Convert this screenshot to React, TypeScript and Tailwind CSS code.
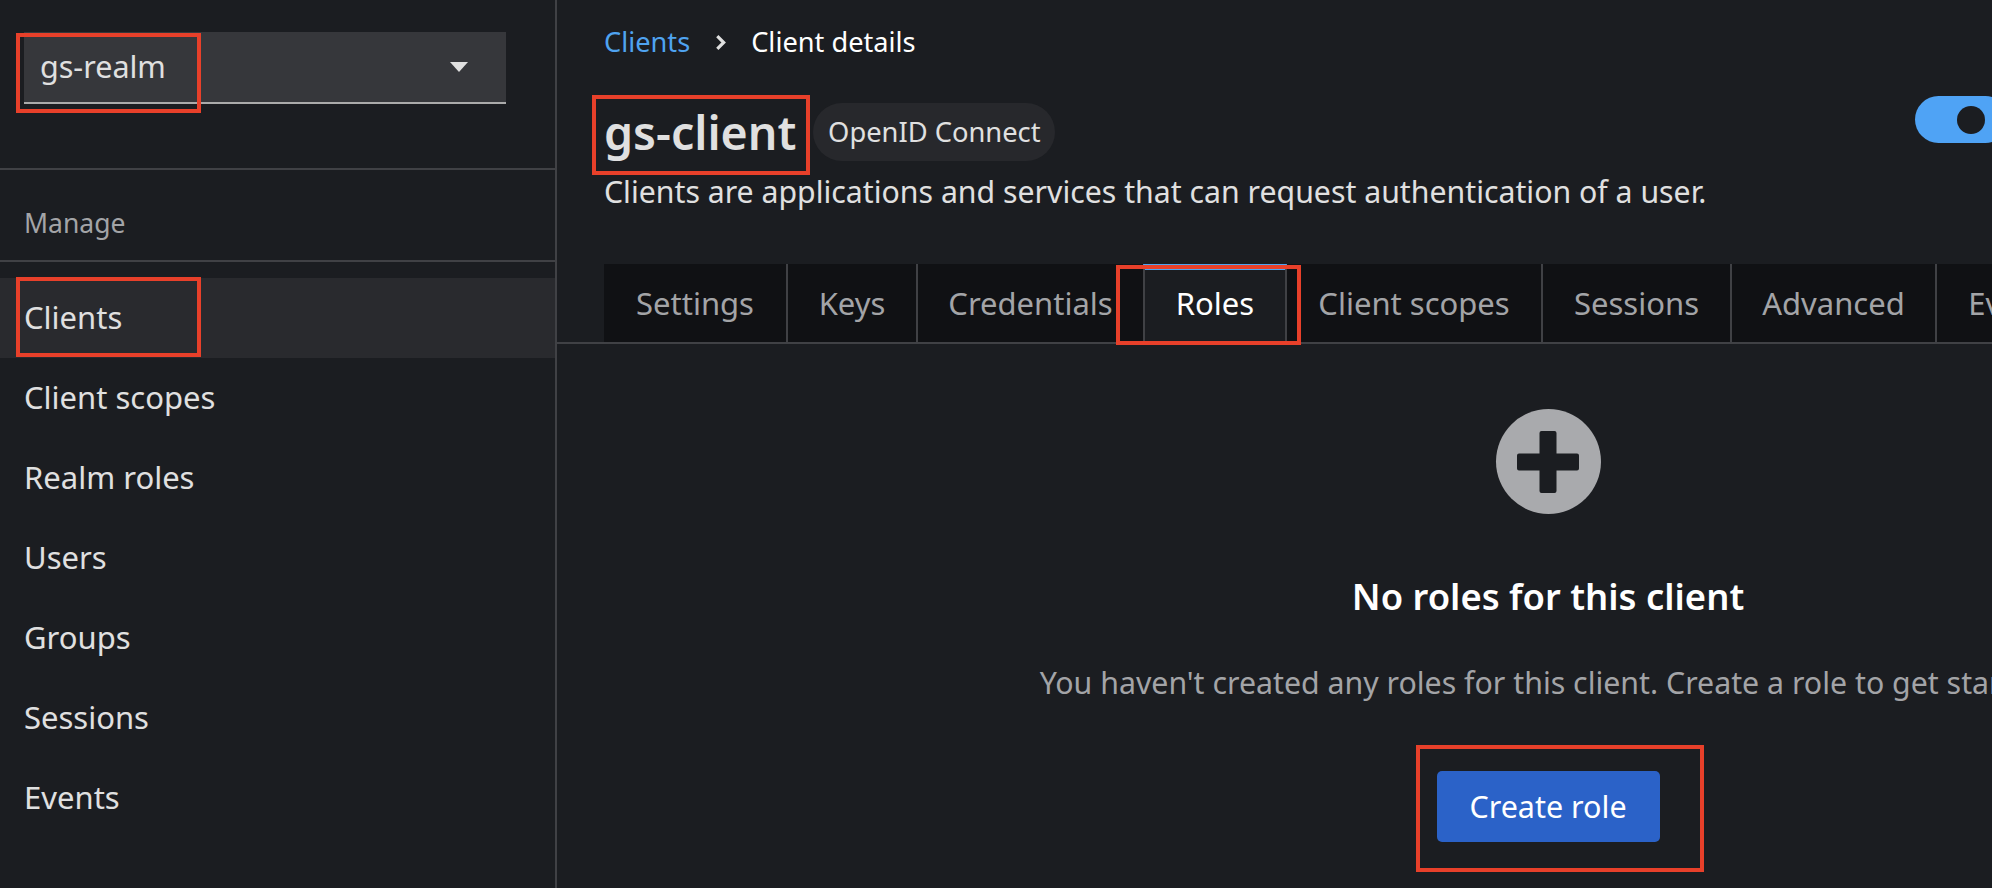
const nav = ["Clients", "Client scopes", "Realm roles", "Users", "Groups", "Sessions", "Events"];
const tabs: [string, string][] = [
  ["Settings", "w-[184px]"],
  ["Keys", "w-[130px]"],
  ["Credentials", "w-[225px]"],
  ["Roles", "w-[144px]"],
  ["Client scopes", "w-[256px]"],
  ["Sessions", "w-[189px]"],
  ["Advanced", "w-[205px]"],
  ["Events", "w-[160px]"],
];

function Box({ cls }: { cls: string }) {
  return <div className={`absolute border-[4px] border-[#e8402a] pointer-events-none ${cls}`} />;
}

export default function App() {
  return (
    <div className="relative flex w-[1992px] h-[888px] overflow-hidden bg-[#1b1d21] font-['Noto_Sans',sans-serif] text-[#e0e0e0]">
      <aside className="w-[557px] shrink-0 h-full border-r-2 border-[#404145] flex flex-col">
        <div className="h-[170px] border-b-2 border-[#404145] pt-[32px] pl-[24px]">
          <div className="w-[482px] h-[72px] bg-[#36373b] border-b-2 border-[#ababab] flex items-center justify-between pl-[16px] pr-[37px] text-[30.5px]">
            <span>gs-realm</span>
            <svg viewBox="0 0 20 12" className="w-[20px] h-[12px] fill-[#e0e0e0]"><path d="M1 1h18l-9 10z" /></svg>
          </div>
        </div>
        <div className="h-[92px] border-b-2 border-[#404145] flex items-center pl-[24px] pt-[18px] text-[26.5px] text-[#a3a4a7]">Manage</div>
        <nav className="pt-[16px] flex flex-col">
          {nav.map((n, i) => (
            <div key={n} className={`h-[80px] flex items-center pl-[24px] pb-[2px] text-[31px] ${i === 0 ? "bg-[#292a2e]" : ""}`}>{n}</div>
          ))}
        </nav>
      </aside>
      <main className="flex-1 min-w-0 overflow-hidden">
        <div className="w-[1982px] flex flex-col">
          <div className="h-[264px] pl-[47px] flex flex-col">
            <div className="pt-[24px] h-[84px] flex items-start text-[27.2px] leading-[36px]">
              <span className="text-[#4fa3f0]">Clients</span>
              <svg viewBox="0 0 12 16" className="w-[13px] h-[17px] mt-[10px] ml-[24px] mr-[24px] fill-none stroke-[#e0e0e0] stroke-[3]"><path d="M3 2l6 6-6 6" /></svg>
              <span className="text-white">Client details</span>
            </div>
            <div className="flex items-center h-[58px] mt-[19px]">
              <h1 className="text-[46.5px] font-semibold leading-none">gs-client</h1>
              <span className="ml-[17px] h-[58px] w-[242px] rounded-full bg-[#27282c] flex items-center justify-center text-[27.3px]">OpenID Connect</span>
            </div>
            <p className="text-[30.25px] leading-none mt-[16px] whitespace-nowrap">Clients are applications and services that can request authentication of a user.</p>
          </div>
          <div className="h-[80px] border-b-2 border-[#404145] pl-[47px] flex">
            {tabs.map(([t, w]) => t === "Roles" ? (
              <div key={t} className={`${w} h-[78px] shrink-0 border-t-[6px] border-[#4fa3f0] border-l-2 border-r-2 border-l-[#404145] border-r-[#404145] bg-[#1b1d21] flex items-center justify-center pb-[5px] text-[31px] text-white`}>{t}</div>
            ) : (
              <div key={t} className={`${w} h-[78px] shrink-0 ${t === "Credentials" ? "" : "border-r-2 border-[#404145]"} bg-[#101114] flex items-center justify-center text-[31px] text-[#a3a4a7]`}>{t}</div>
            ))}
          </div>
          <div className="flex flex-col items-center pt-[65px]">
            <div className="w-[105px] h-[105px] rounded-full bg-[#a9aaad] flex items-center justify-center">
              <svg viewBox="0 0 62 62" className="w-[62px] h-[62px] fill-[#1b1d21]"><path d="M22.5 2a2 2 0 0 1 2-2h13a2 2 0 0 1 2 2v20.500h20.500a2 2 0 0 1 2 2v13a2 2 0 0 1-2 2H39.500V60a2 2 0 0 1-2 2h-13a2 2 0 0 1-2-2V39.500H2a2 2 0 0 1-2-2v-13a2 2 0 0 1 2-2h20.500z" /></svg>
            </div>
            <h2 className="mt-[60px] text-[36.4px] font-semibold leading-[44px] text-white">No roles for this client</h2>
            <p className="mt-[45px] text-[30.3px] leading-[40px] text-[#a3a4a7] whitespace-nowrap">You haven't created any roles for this client. Create a role to get started.</p>
            <button className="mt-[68px] w-[223px] h-[71px] rounded-[5px] bg-[#2b62c8] text-white text-[30.5px]">Create role</button>
          </div>
        </div>
      </main>
      <div className="absolute left-[1915px] top-[96px] w-[94px] h-[47px] rounded-full bg-[#4fa3f5] flex items-center justify-end pr-[24px]">
        <div className="w-[28px] h-[28px] rounded-full bg-[#1b1d21]" />
      </div>
      <Box cls="left-[16px] top-[33px] w-[185px] h-[80px]" />
      <Box cls="left-[16px] top-[277px] w-[185px] h-[80px]" />
      <Box cls="left-[592px] top-[95px] w-[218px] h-[80px]" />
      <Box cls="left-[1116px] top-[265px] w-[185px] h-[80px]" />
      <Box cls="left-[1416px] top-[745px] w-[288px] h-[127px]" />
    </div>
  );
}
